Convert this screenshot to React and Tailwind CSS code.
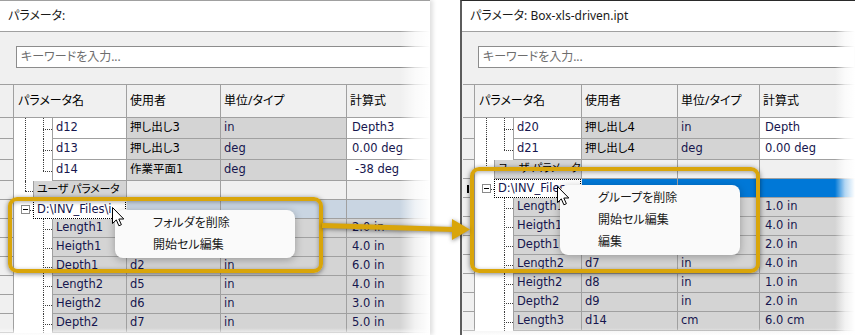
import React from "react";

const JP = "font-['Noto_Sans','Noto_Sans_CJK_JP',sans-serif] [font-feature-settings:'palt']";
const GRID = "font-['DejaVu_Sans','Noto_Sans_CJK_JP',sans-serif] [font-feature-settings:'palt'] text-[11.5px]";
const LINE = "border-[#a0a0a0]";
const DOT = "border-dotted border-[#3c3c3c]";
const GRAY = "bg-[#d4d4d4]";

const LEFT = {
  sel: "w-[14px]",
  name: "w-[113px]",
  user: "w-[94px]",
  unit: "w-[126px]",
  gridMl: "ml-0",
  folderBg: "bg-[#c9d5e2]",
};

const RIGHT = {
  sel: "w-[12px]",
  name: "w-[107px]",
  user: "w-[96px]",
  unit: "w-[82px]",
  gridMl: "ml-[1px]",
  folderBg: "bg-[#0078d7]",
};

// user/unit cells that sit under the context menu are left empty
const leftRows = [
  { type: "model", name: "d12", user: "押し出し3", unit: "in", expr: "Depth3" },
  { type: "model", name: "d13", user: "押し出し3", unit: "deg", expr: "0.00 deg" },
  { type: "model", name: "d14", user: "作業平面1", unit: "deg", expr: "-38 deg", last: true, shift: true },
  { type: "group", name: "ユーザ パラメータ" },
  { type: "folder", name: "D:\\INV_Files\\i" },
  { type: "child", name: "Length1", user: "", unit: "", expr: "2.0 in" },
  { type: "child", name: "Heigth1", user: "", unit: "", expr: "4.0 in" },
  { type: "child", name: "Depth1", user: "d2", unit: "in", expr: "6.0 in" },
  { type: "child", name: "Length2", user: "d5", unit: "in", expr: "4.0 in" },
  { type: "child", name: "Heigth2", user: "d6", unit: "in", expr: "3.0 in" },
  { type: "child", name: "Depth2", user: "d7", unit: "in", expr: "5.0 in" },
];

const rightRows = [
  { type: "model", name: "d20", user: "押し出し4", unit: "in", expr: "Depth" },
  { type: "model", name: "d21", user: "押し出し4", unit: "deg", expr: "0.00 deg", last: true },
  { type: "group", name: "ユーザ パラメータ" },
  { type: "folder", name: "D:\\INV_Files", marker: true },
  { type: "child", name: "Length1", user: "", unit: "", expr: "1.0 in" },
  { type: "child", name: "Heigth1", user: "", unit: "", expr: "4.0 in" },
  { type: "child", name: "Depth1", user: "", unit: "", expr: "2.0 in" },
  { type: "child", name: "Length2", user: "d7", unit: "in", expr: "4.0 in" },
  { type: "child", name: "Heigth2", user: "d8", unit: "in", expr: "1.0 in" },
  { type: "child", name: "Depth2", user: "d9", unit: "in", expr: "2.0 in" },
  { type: "child", name: "Length3", user: "d14", unit: "cm", expr: "6.0 cm" },
];

function Tree({ type, last }) {
  if (type === "model" || type === "child") {
    return (
      <div className="relative w-[38px] shrink-0 bg-white">
        {type === "model" && <span className={`absolute left-[11px] top-0 bottom-0 border-l ${DOT}`} />}
        <span className={`absolute left-[29px] top-0 ${last ? "h-1/2" : "bottom-0"} border-l ${DOT}`} />
        <span className={`absolute left-[29px] top-1/2 w-[9px] border-t ${DOT}`} />
      </div>
    );
  }
  if (type === "group") {
    return (
      <div className="relative w-[19px] shrink-0 bg-white">
        <span className={`absolute left-[11px] top-0 h-1/2 border-l ${DOT}`} />
        <span className={`absolute left-[11px] top-1/2 w-[8px] border-t ${DOT}`} />
      </div>
    );
  }
  return (
    <div className="relative w-[19px] shrink-0 bg-white">
      <span className="absolute left-[7px] top-[5px] w-[9px] h-[9px] border border-[#8a8a8a] bg-white flex items-center justify-center">
        <span className="w-[5px] h-px bg-black" />
      </span>
      <span className={`absolute left-[16px] top-1/2 w-[3px] border-t ${DOT}`} />
    </div>
  );
}

function Row({ cfg, r }) {
  const h = r.type === "model" ? "h-[21px]" : "h-[19px]";
  const rest = r.type === "group" ? "bg-[#f0f0f0]" : r.type === "folder" ? cfg.folderBg : GRAY;
  const exprBg = r.type === "model" ? "bg-white" : rest;

  let label = `border-l border-r border-b ${LINE} ${GRAY}`;
  if (r.type === "model") label = `border-l border-r border-b ${LINE} bg-white`;
  if (r.type === "group") label = `border-l border-r border-b ${LINE} ${GRAY} shadow-[0_-1px_0_#a0a0a0] text-black text-[11px] tracking-[-0.3px]`;
  if (r.type === "folder") label = "border border-dotted border-black bg-white mr-[1px]";

  return (
    <div className={`flex ${h} shrink-0 text-[#16164e]`}>
      <div className={`${cfg.sel} shrink-0 relative bg-[#f0f0f0] border-r border-b ${LINE}`}>
        {r.marker && <span className="absolute left-[4px] top-[6px] w-[2px] h-[8px] bg-black" />}
      </div>
      <div className={`${cfg.name} shrink-0 flex`}>
        <Tree type={r.type} last={r.last} />
        <div className={`flex-1 min-w-0 flex items-center pl-[3px] overflow-hidden whitespace-nowrap ${label}`}>
          {r.name}
        </div>
      </div>
      <div className={`${cfg.user} shrink-0 flex items-center pl-[3px] whitespace-nowrap border-r border-b ${LINE} ${rest} ${r.type === "model" ? "text-black" : ""}`}>
        {r.user}
      </div>
      <div className={`${cfg.unit} shrink-0 flex items-center pl-[3px] whitespace-nowrap border-r border-b ${LINE} ${rest}`}>
        {r.unit}
      </div>
      <div className={`flex-1 flex items-center whitespace-nowrap border-b ${LINE} ${exprBg} ${r.shift ? "pl-[8px]" : "pl-[5px]"}`}>
        {r.expr}
      </div>
    </div>
  );
}

function Header({ cfg }) {
  return (
    <div className={`flex h-[34px] shrink-0 border-t ${LINE} ${JP} text-[12px] text-black bg-[#f0f0f0]`}>
      <div className={`${cfg.sel} shrink-0 border-r border-b ${LINE}`} />
      <div className={`${cfg.name} shrink-0 flex items-center pl-[4px] border-r border-b ${LINE}`}>パラメータ名</div>
      <div className={`${cfg.user} shrink-0 flex items-center pl-[3px] border-r border-b ${LINE}`}>使用者</div>
      <div className={`${cfg.unit} shrink-0 flex items-center pl-[3px] border-r border-b ${LINE}`}>単位/タイプ</div>
      <div className={`flex-1 flex items-center pl-[3px] border-b ${LINE}`}>計算式</div>
    </div>
  );
}

function Dialog({ cfg, title, rows, className, fade }) {
  return (
    <div className={`relative h-[335px] shrink-0 overflow-hidden flex flex-col ${className}`}>
      <div className={`h-[31px] shrink-0 bg-white border-b ${LINE} flex items-center pl-[8px] ${JP} text-[12px] text-[#1a1a1a]`}>
        {title}
      </div>
      <div className="flex-1 bg-[#f0f0f0] flex flex-col">
        <div className={`mt-[14px] ml-[16px] h-[22px] shrink-0 bg-white border border-[#8c8c8c] flex items-center pl-[4px] ${JP} text-[12px] text-[#6d6d6d]`}>
          キーワードを入力...
        </div>
        <div className={`mt-[16px] ${cfg.gridMl} flex flex-col ${GRID}`}>
          <Header cfg={cfg} />
          {rows.map((r, i) => (
            <Row key={i} cfg={cfg} r={r} />
          ))}
        </div>
      </div>
      <div className={`absolute top-0 bottom-0 right-0 ${fade} bg-linear-to-r from-white/0 via-white/70 to-white`} />
      <div className="absolute left-0 right-0 bottom-0 h-[7px] bg-linear-to-b from-white/0 to-white/90" />
    </div>
  );
}

function Cursor({ className }) {
  return (
    <svg className={className} width="13" height="20" viewBox="0 0 13 20">
      <path
        d="M0.5 0.5 L0.5 16.5 L4.3 12.9 L6.9 18.8 L9.4 17.7 L6.8 12 L11.8 12 Z"
        fill="white"
        stroke="black"
        strokeWidth="1"
      />
    </svg>
  );
}

function Menu({ className, items }) {
  return (
    <div className={`absolute bg-[#fafafa] rounded-[8px] shadow-[0_2px_8px_rgba(0,0,0,0.28)] flex flex-col ${JP} text-[12px] text-[#1a1a1a] ${className}`}>
      {items.map((t) => (
        <div key={t} className="h-[22px] flex items-center pl-[38px] whitespace-nowrap">
          {t}
        </div>
      ))}
    </div>
  );
}

const GOLD = "border-4 border-[#d9a50a] rounded-[9px] shadow-[0_1px_5px_rgba(0,0,0,0.5),inset_0_1px_4px_rgba(0,0,0,0.35)]";

export default function App() {
  return (
    <div className="relative w-[855px] h-[335px] overflow-hidden bg-white flex">
      <Dialog
        cfg={LEFT}
        title="パラメータ:"
        rows={leftRows}
        fade="w-[30px]"
        className={`w-[430px] border-t ${LINE} shadow-[3px_0_4px_rgba(0,0,0,0.12)]`}
      />
      <div className="w-[30px] shrink-0" />
      <Dialog
        cfg={RIGHT}
        title="パラメータ: Box-xls-driven.ipt"
        rows={rightRows}
        fade="w-[20px]"
        className="w-[395px] border-l-2 border-l-[#5c5c5c] border-t border-t-[#2a2a2a]"
      />

      <Menu className="left-[115px] top-[210px] w-[180px] h-[48px] pt-[2px]" items={["フォルダを削除", "開始セル編集"]} />
      <Menu className="left-[560px] top-[185px] w-[180px] h-[70px] pt-[2px]" items={["グループを削除", "開始セル編集", "編集"]} />

      <Cursor className="absolute left-[112px] top-[207px]" />
      <Cursor className="absolute left-[557px] top-[186px]" />

      <div className={`absolute left-[8px] top-[197px] w-[315px] h-[76px] ${GOLD}`} />
      <div className={`absolute left-[470px] top-[167px] w-[290px] h-[106px] ${GOLD}`} />

      <svg
        className="absolute left-[320px] top-[210px] drop-shadow-[0_1px_2px_rgba(0,0,0,0.5)]"
        width="155"
        height="40"
        viewBox="0 0 155 40"
      >
        <line x1="2" y1="15.5" x2="134" y2="19.5" stroke="#d9a50a" strokeWidth="5" />
        <polygon points="132,9 150,19.5 132,30" fill="#d9a50a" />
      </svg>
    </div>
  );
}
